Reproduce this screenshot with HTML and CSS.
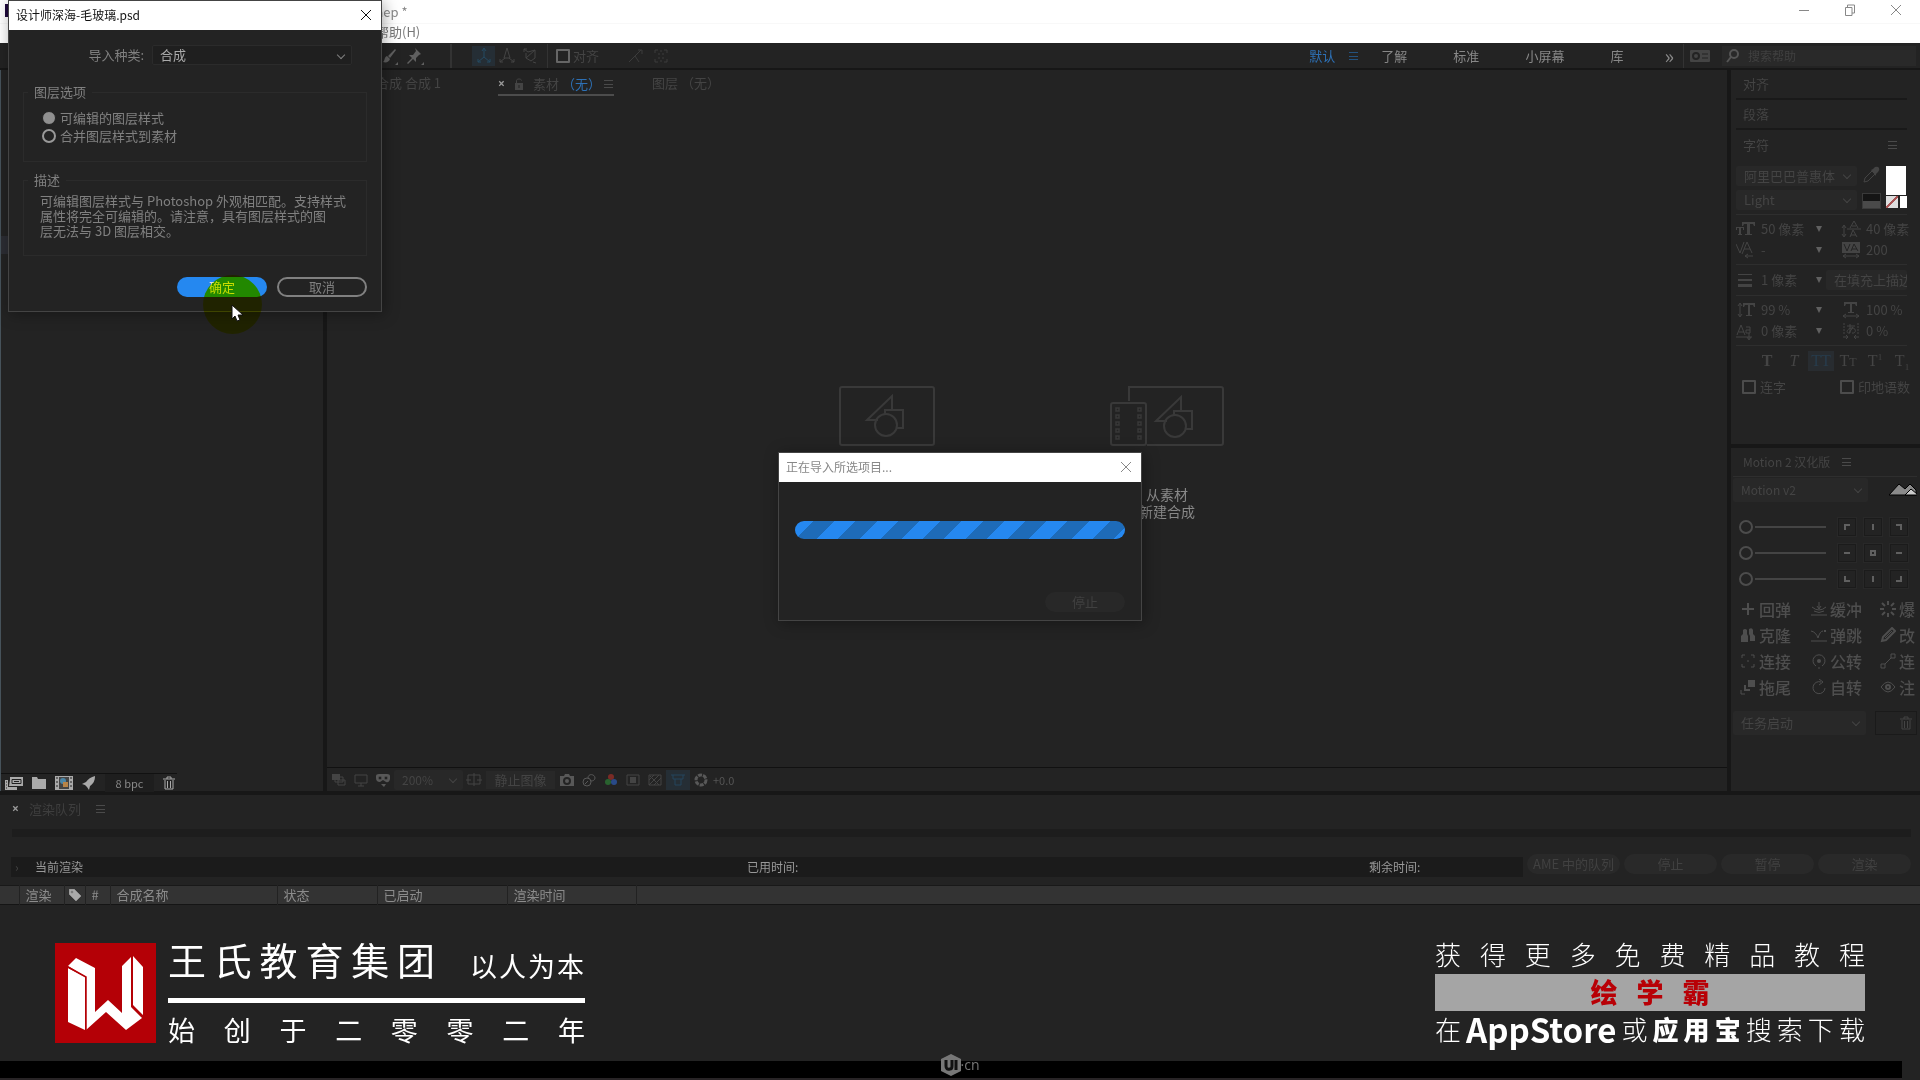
FILE: index.html
```html
<!DOCTYPE html>
<html lang="zh-CN">
<head>
  <meta charset="UTF-8" />
  <meta name="viewport" content="width=device-width, initial-scale=1.0"/>
  <title>After Effects</title>
  <link rel="stylesheet" href="styles.css">
</head>
<body>
  <!-- Title bar and menu -->
  <header class="titlebar">
    <span class="app-icon"></span>
    <span class="file-name">aep *</span>
    <div class="window-buttons">
      <button aria-label="最小化"><svg width="12" height="12" viewBox="0 0 12 12"><path d="M1 6.5h10"/></svg></button>
      <button aria-label="还原"><svg width="12" height="12" viewBox="0 0 12 12"><path d="M1.5 3.500h6.500v8h-6.500zM3.500 3.500v-2.500h7v8h-2.500"/></svg></button>
      <button aria-label="关闭"><svg width="12" height="12" viewBox="0 0 12 12"><path d="M1 1l10 10M11 1L1 11"/></svg></button>
    </div>
  </header>
  <nav class="menubar"><a href="#">帮助(H)</a></nav>

  <!-- Tools -->
  <div class="toolbar">
    <button class="tool bright" aria-label="画笔"><svg width="20" height="20" viewBox="0 0 20 20"><path class="fill" d="M16 3l1 1-6 8-2-2zM8 10l3 3c-1 3-4 4-7 3 2-1 1-5 4-6zM19 16v3h-3z"/></svg></button>
    <button class="tool bright" aria-label="操控点"><svg width="20" height="20" viewBox="0 0 20 20"><path class="fill" d="M10 2l6 6-2 1-3 3v4l-3-3-5 5-1-1 5-5-3-3h4l3-4zM19 16v3h-3z"/></svg></button>
    <i class="bar wide"></i>
    <button class="tool active" aria-label="本地轴"><svg width="20" height="20" viewBox="0 0 20 20"><path d="M10 3v8l-6 5M10 11l6 5M8 5l2-3 2 3M4 13v3h3M16 13v3h-3"/></svg></button>
    <button class="tool" aria-label="世界轴"><svg width="20" height="20" viewBox="0 0 20 20"><path d="M10 2l-3 10h6zM8 12l-5 4M12 12l5 4M3 13v3h3M17 13v3h-3"/></svg></button>
    <button class="tool" aria-label="视图轴"><svg width="20" height="20" viewBox="0 0 20 20"><path d="M4 3l4 3 7-2v8l-4 3-5-3V7M6 12l9-8M4 6V3h3M13 16l3 1"/></svg></button>
    <i class="bar tail"></i>
    <label class="snap"><input type="checkbox"> 对齐</label>
    <button class="tool faint" aria-label="边缘"><svg width="20" height="20" viewBox="0 0 20 20"><path d="M3 16l6-6 4 6M9 10l6-6M12 4h4v4"/></svg></button>
    <button class="tool faint" aria-label="范围"><svg width="20" height="20" viewBox="0 0 20 20"><path d="M4 7V4h3M13 4h3v3M16 13v3h-3M7 16H4v-3M7 8h2M11 8h2M7 12h2M11 12h2M10 4v2M10 14v2"/></svg></button>

    <div class="spaces">
      <a class="on" href="#">默认</a>
      <i class="burger blue"></i>
      <a href="#">了解</a>
      <a href="#">标准</a>
      <a href="#">小屏幕</a>
      <a href="#">库</a>
      <a class="more" href="#">»</a>
    </div>
    <i class="bar"></i>
    <button class="sync" aria-label="同步设置"><svg width="20" height="12" viewBox="0 0 20 12"><rect class="fill" width="20" height="12" rx="1"/><circle cx="6" cy="6" r="3" stroke="#232323" fill="none" stroke-width="2"/><path stroke="#232323" d="M12 4h6M12 8h6"/></svg></button>
    <label class="search">
      <svg width="14" height="14" viewBox="0 0 14 14"><circle cx="8" cy="5" r="4"/><path d="M5 8l-4 5"/></svg>
      <input type="text" placeholder="搜索帮助" aria-label="搜索帮助">
    </label>
  </div>

  <main class="workspace">
    <section class="panel project">
      <div class="project-list"><div class="project-search"></div></div>
      <div class="project-foot">
        <svg width="18" height="14" viewBox="0 0 18 14"><path class="fill" d="M0 4h3v10H0zM3 11h9v3H3zM5 1h13v9H5zM4 4v6h1"/><path stroke="#222" d="M7 3.500h9v4H7zM9 5.500h5M1 6h1M1 9h1M1 12h1"/></svg>
        <svg width="14" height="14" viewBox="0 0 14 14"><path class="fill" d="M0 1h5l1 2h8v10H0z"/></svg>
        <svg width="18" height="14" viewBox="0 0 18 14"><path class="fill" d="M0 0h18v14H0z"/><path fill="#444" stroke="none" d="M4 1h10v12H4z"/><circle cx="8" cy="5" r="3" fill="#4a86a8" stroke="none"/><path fill="#b88448" stroke="none" d="M8 6h5v5H8z"/><path stroke="#222" d="M2 1v12M16 1v12" stroke-dasharray="2 2"/></svg>
        <svg width="14" height="14" viewBox="0 0 14 14"><path class="fill" d="M13 0c0 5-2 8-5 10l-1 4-2-3-2-2-3-1 4-2C6 3 9 1 13 0z"/></svg>
        <button class="bpc">8 bpc</button>
        <svg width="12" height="14" viewBox="0 0 12 14"><path d="M0 3h12M4 3V1h4v2M2 4v9h8V4M4.500 5v7M7.500 5v7"/></svg>
      </div>
    </section>

    <section class="panel viewer">
      <div class="tabs">
        <span class="tab comp-tab">合成 合成 1</span>
        <span class="tab current">
          <b>×</b>
          <svg width="10" height="12" viewBox="0 0 10 12"><path class="fill" d="M1 5h8v7H1z"/><path d="M2.500 5V2.500c0-2 5-2 5 0"/><path stroke="#232323" d="M5 7v3"/></svg>
          <span>素材</span><em>（无）</em>
          <i class="burger"></i>
        </span>
        <span class="tab">图层 （无）</span>
      </div>
      <div class="stage">
        <div class="choice">
          <svg width="96" height="60" viewBox="0 0 96 60"><rect x="1" y="1" width="94" height="58" rx="2"/><path d="M39 34H28l25-24v14M46 28v-4h18v18h-6"/><circle cx="47" cy="39" r="11"/></svg>
        </div>
        <div class="choice">
          <svg width="114" height="60" viewBox="0 0 114 60"><path d="M19 15V1h92q2 0 2 2v54q0 2-2 2H37"/><rect x="1" y="17" width="35" height="42" rx="2"/><path stroke-width="1.500" d="M6 22h3v3H6zM6 29h3v3H6zM6 36h3v3H6zM6 43h3v3H6zM6 50h3v3H6zM28 22h3v3h-3zM28 29h3v3h-3zM28 36h3v3h-3zM28 43h3v3h-3zM28 50h3v3h-3z"/><path d="M57 35H46l25-24v14M64 29v-4h18v18h-6"/><circle cx="65" cy="40" r="11"/></svg>
          <p>从素材<br>新建合成</p>
        </div>
      </div>
      <div class="viewer-foot">
        <svg width="16" height="16" viewBox="0 0 16 16"><path class="fill" d="M1 2h8v6H1z"/><path d="M4 10V5h8v5zM7 13V8h7v5z"/></svg>
        <svg width="16" height="16" viewBox="0 0 16 16"><path d="M2 3h12v8H2zM8 11v3M5 14h6"/></svg>
        <svg class="light" width="16" height="16" viewBox="0 0 16 16"><path class="fill" d="M1 4q0-2 3-2h8q3 0 3 2v3q-1 4-4 3L8 8 5 10Q1 10 1 6zM6 12h5l-2 3z"/><circle cx="5" cy="6" r="2" fill="#232323"/><circle cx="11" cy="6" r="2" fill="#232323"/></svg>
        <span class="pick zoom"><select aria-label="放大率"><option>200%</option></select></span>
        <svg width="16" height="16" viewBox="0 0 16 16"><path d="M2 3h12v9H2zM8 1v13M0 8h5M11 8h5"/></svg>
        <button class="still">静止图像</button>
        <svg class="light" width="16" height="16" viewBox="0 0 16 16"><path class="fill" d="M1 4h4l1-2h4l1 2h4v10H1z"/><circle cx="8" cy="9" r="3" stroke="#232323" stroke-width="2"/></svg>
        <svg class="light" width="16" height="16" viewBox="0 0 16 16"><circle cx="6" cy="10" r="4"/><path d="M7 6c0-5 7-4 7 0 0 2-2 3-4 3M4 12l3-3"/></svg>
        <svg width="16" height="16" viewBox="0 0 16 16"><circle cx="8" cy="5" r="3" fill="#7a2b26" stroke="none"/><circle cx="5" cy="10" r="3" fill="#29622f" stroke="none"/><circle cx="11" cy="10" r="3" fill="#294a88" stroke="none"/></svg>
        <svg width="16" height="16" viewBox="0 0 16 16"><path d="M2 3h12v10H2z"/><path class="fill" d="M5 5h6v6H5z"/></svg>
        <svg width="16" height="16" viewBox="0 0 16 16"><path d="M2 3h12v10H2zM2 8l5-5M2 13L12 3M7 13l7-7M3 4l9 9"/></svg>
        <span class="lit"><svg width="16" height="16" viewBox="0 0 16 16"><path d="M1 3h14M3 3v4h10V3M5 7v6h6V7"/></svg></span>
        <svg class="light" width="16" height="16" viewBox="0 0 16 16"><circle cx="8" cy="8" r="5" stroke-width="3" stroke-dasharray="4 1"/></svg>
        <span class="exposure">+0.0</span>
      </div>
    </section>

    <aside class="side">
      <div class="panel">
        <h3 class="head ruled">对齐</h3>
        <h3 class="head ruled">段落</h3>
        <h3 class="head">字符 <i class="burger"></i></h3>
        <div class="font-row">
          <div class="font-picks">
            <span class="pick"><select aria-label="字体"><option>阿里巴巴普惠体</option></select></span>
            <span class="pick"><select aria-label="字重"><option>Light</option></select></span>
          </div>
          <div class="ink">
            <svg width="18" height="18" viewBox="0 0 18 18"><path d="M2 16l1-4 7-7 3 3-7 7z"/><path class="fill" d="M9 4l2-1 2-2q3-1 4 1t-1 4l-2 2v2z"/></svg>
            <i class="mono"></i>
          </div>
          <div class="fills">
            <i class="white"></i>
            <div><i class="none"></i><i class="white small"></i></div>
          </div>
        </div>
        <div class="metrics">
          <svg width="20" height="18" viewBox="0 0 20 18"><path class="fill" d="M6 2h13v4h-1l-1-2h-3v10h2v1H9v-1h2V4H8L7 6H6zM0 7h8v3H7V8H5v6h1v1H2v-1h1V8H1v2H0z"/></svg><span>50 像素</span><i class="drop"></i>
          <svg width="20" height="18" viewBox="0 0 20 18"><path d="M9 8l4-7 4 7M11 6h4M6 9h14M9 17l3-7 4 7M10 15h5M3 6v10M1 8l2-3 2 3M1 14l2 3 2-3"/></svg><span>40 像素</span>
          <svg width="20" height="18" viewBox="0 0 20 18"><path d="M0 3l4 9 4-11M6 13L11 1l5 11M8 8h6M9 15h8M12 13l-3 2 3 2"/></svg><span>-</span><i class="drop"></i>
          <svg width="20" height="18" viewBox="0 0 20 18"><path class="fill" d="M1 1h18v11H1z"/><path stroke="#232323" d="M3 3l3 7 3-7M10 10l3-7 4 7M11 8h5"/><path d="M2 15h16M5 13l-3 2 3 2M15 13l3 2-3 2"/></svg><span>200</span>
        </div>
        <div class="metrics">
          <svg width="20" height="18" viewBox="0 0 20 18"><path class="fill" d="M2 3h14v1H2zM2 8h14v2H2zM2 13h14v3H2z"/></svg><span>1 像素</span><i class="drop"></i>
          <span class="pick stroke-pick"><select aria-label="描边方式"><option>在填充上描边</option></select></span>
        </div>
        <div class="metrics">
          <svg width="20" height="18" viewBox="0 0 20 18"><path d="M4 3v12M2 5l2-3 2 3M2 13l2 3 2-3"/><path class="fill" d="M7 2h12v4h-1l-1-2h-3v10h2v1h-6v-1h2V4H9L8 6H7z"/></svg><span>99 %</span><i class="drop"></i>
          <svg width="20" height="18" viewBox="0 0 20 18"><path class="fill" d="M3 1h13v4h-1l-1-2h-3v8h2v1H7v-1h2V3H5L4 5H3z"/><path d="M2 15h16M5 13l-3 2 3 2M15 13l3 2-3 2"/></svg><span>100 %</span>
          <svg width="20" height="18" viewBox="0 0 20 18"><path d="M1 13L5 3l4 10M3 10h5M0 15h16M10 5h4v6h-4V8h4M13 11v6M11 15l2 3 2-3"/></svg><span>0 像素</span><i class="drop"></i>
          <svg width="20" height="18" viewBox="0 0 20 18"><path stroke-dasharray="2 1" d="M3 1v12M17 1v12"/><path d="M6 4h8M9 2v9c-5 1-3-5 2-5s4 6 0 5M12 5l-4 6M2 15h5M5 13l2 2-2 2M18 15h-5M15 13l-2 2 2 2"/></svg><span>0 %</span>
        </div>
        <div class="faces">
          <button><b>T</b></button><button><em>T</em></button><button class="on">TT</button><button>T<small>T</small></button><button>T<sup>1</sup></button><button>T<sub>1</sub></button>
        </div>
        <div class="checks">
          <label><input type="checkbox">连字</label>
          <label><input type="checkbox">印地语数</label>
        </div>
      </div>

      <div class="panel motion">
        <h3 class="head">Motion 2 汉化版 <i class="burger"></i></h3>
        <div class="motion-top">
          <span class="pick"><select aria-label="Motion"><option>Motion v2</option></select></span>
          <svg width="28" height="14" viewBox="0 0 28 14"><path fill="#8a8a8a" stroke="#000" d="M0 12L10 1l6 5 5-5 6 6v5z"/><path fill="#ccc" stroke="#000" d="M16 12l6-6 6 5v1z"/></svg>
        </div>
        <div class="easing">
          <div class="sliders">
            <input type="range" value="0" aria-label="缓入">
            <input type="range" value="0" aria-label="缓动">
            <input type="range" value="0" aria-label="缓出">
          </div>
          <div class="anchors">
            <button aria-label="左上"><svg width="16" height="16" viewBox="0 0 16 16"><path d="M6 11V6h5"/></svg></button>
            <button aria-label="上"><svg width="16" height="16" viewBox="0 0 16 16"><path d="M8 5v6"/></svg></button>
            <button aria-label="右上"><svg width="16" height="16" viewBox="0 0 16 16"><path d="M5 6h5v5"/></svg></button>
            <button aria-label="左"><svg width="16" height="16" viewBox="0 0 16 16"><path d="M5 8h6"/></svg></button>
            <button aria-label="中"><svg width="16" height="16" viewBox="0 0 16 16"><path d="M6 6h4v4H6z"/></svg></button>
            <button aria-label="右"><svg width="16" height="16" viewBox="0 0 16 16"><path d="M5 8h6"/></svg></button>
            <button aria-label="左下"><svg width="16" height="16" viewBox="0 0 16 16"><path d="M6 5v5h5"/></svg></button>
            <button aria-label="下"><svg width="16" height="16" viewBox="0 0 16 16"><path d="M8 5v6"/></svg></button>
            <button aria-label="右下"><svg width="16" height="16" viewBox="0 0 16 16"><path d="M5 10h5V5"/></svg></button>
          </div>
        </div>
        <div class="actions">
          <button><svg width="16" height="16" viewBox="0 0 16 16"><path stroke-width="2" d="M8 2v12M2 8h12"/></svg>回弹</button>
          <button><svg width="16" height="16" viewBox="0 0 16 16"><path d="M8 1v6M6 5l2 3 2-3M1 6q7 6 14 0M3 10q5 3 10 0M0 14h16"/></svg>缓冲</button>
          <button><svg width="16" height="16" viewBox="0 0 16 16"><path stroke-width="2" d="M8 0v4M8 12v4M0 8h4M12 8h4M2 2l3 3M11 11l3 3M14 2l-3 3M5 11l-3 3"/></svg>爆</button>
          <button><svg width="16" height="16" viewBox="0 0 16 16"><path class="fill" d="M1 15V9l2-2V3q2-2 4 0v4l1 2v6zM9 2q3-2 4 1v4l2 2v5h-5V9L9 7z"/></svg>克隆</button>
          <button><svg width="16" height="16" viewBox="0 0 16 16"><path d="M0 4q5 1 7 7 2-7 5-7M0 14h16"/><path class="fill" d="M13 3h2v2h-2z"/></svg>弹跳</button>
          <button><svg width="16" height="16" viewBox="0 0 16 16"><path stroke-width="2" d="M2 14l1-4 9-9 3 3-9 9z"/><path d="M5 11l7-7"/></svg>改</button>
          <button><svg width="16" height="16" viewBox="0 0 16 16"><path d="M2 5V2h3M11 2h3v3M14 11v3h-3M5 14H2v-3M7 8h2"/></svg>连接</button>
          <button><svg width="16" height="16" viewBox="0 0 16 16"><path d="M5 13a6 6 0 1 1 6 0"/><circle class="fill" cx="8" cy="8" r="2"/><path d="M8 14v2"/></svg>公转</button>
          <button><svg width="16" height="16" viewBox="0 0 16 16"><path d="M1 11h4v4H1zM11 1h4v4h-4zM5 11l6-6"/></svg>连</button>
          <button><svg width="16" height="16" viewBox="0 0 16 16"><path class="fill" d="M8 1h7v7H8z"/><path stroke-width="2" d="M5 6v5h5"/><path d="M1 11v4h4"/></svg>拖尾</button>
          <button><svg width="16" height="16" viewBox="0 0 16 16"><path d="M10 3a6 6 0 1 0 4 6M8 0l4 3-4 3"/></svg>自转</button>
          <button><svg width="16" height="16" viewBox="0 0 16 16"><path d="M1 8q7-10 14 0-7 10-14 0z"/><circle cx="8" cy="8" r="2" stroke-width="2"/></svg>注</button>
        </div>
        <div class="motion-end">
          <span class="pick"><select aria-label="任务"><option>任务启动</option></select></span>
          <button class="bin" aria-label="删除"><svg width="12" height="14" viewBox="0 0 12 14"><path d="M0 3h12M4 3V1h4v2M2 4v9h8V4M4.500 5v7M7.500 5v7"/></svg></button>
        </div>
      </div>
    </aside>
  </main>

  <!-- Render queue -->
  <section class="queue">
    <div class="queue-tab"><b>×</b><span>渲染队列</span><i class="burger"></i></div>
    <div class="queue-track"></div>
    <div class="queue-row">
      <div class="queue-info">
        <span class="current-render">当前渲染</span>
        <span class="elapsed">已用时间:</span>
        <span class="remain">剩余时间:</span>
      </div>
      <button>AME 中的队列</button>
      <button>停止</button>
      <button>暂停</button>
      <button>渲染</button>
    </div>
    <table class="queue-table">
      <colgroup><col class="c1"><col class="c2"><col class="c3"><col class="c4"><col class="c5"><col class="c6"><col class="c7"><col class="c8"><col></colgroup>
      <tr>
        <th></th>
        <th>渲染</th>
        <th class="tag"><svg width="12" height="12" viewBox="0 0 12 12"><path fill="#aaa" d="M0 0h5l7 7-5 5-7-7z"/><circle cx="3" cy="3" r="1" fill="#333"/></svg></th>
        <th>#</th>
        <th>合成名称</th>
        <th>状态</th>
        <th>已启动</th>
        <th>渲染时间</th>
        <th></th>
      </tr>
    </table>
  </section>

  <footer class="banner">
    <svg class="brand-logo" width="101" height="100" viewBox="0 0 101 100">
      <path fill="#b40006" d="M0 0h101v100H0z"/>
      <path fill="#fff" d="M13 23l8-8 19 10v44l13-12 14 13V23l9-9v50l11 11-16 12-20-18-20 18V34z"/>
      <path fill="#fff" d="M13 25l17 9v53l-17-8zM78 13l10 11v48L78 62z"/>
      <path fill="none" stroke="#b40006" stroke-width="1.500" d="M13 24l18 10v53M77 12v51l11 11"/>
    </svg>
    <div class="brand">
      <div class="brand-top"><h1>王氏教育集团</h1><p>以人为本</p></div>
      <p class="brand-since">始创于二零零二年</p>
    </div>
    <div class="promo">
      <p class="spread">获得更多免费精品教程</p>
      <p class="promo-name"><span>绘学霸</span></p>
      <p class="promo-store"><span>在</span><b class="store">AppStore</b><span>或</span><b>应</b><b>用</b><b>宝</b><span>搜</span><span>索</span><span>下</span><span>载</span></p>
    </div>
  </footer>
  <div class="bottom-bar">
    <div class="watermark">
      <svg width="20" height="22" viewBox="0 0 20 22"><path fill="#777" d="M10 0l10 5v12l-10 5-10-5V5z"/><path fill="none" stroke="#111" stroke-width="3" d="M5 6v6q0 4 4 3 2 0 2-3V6M15 6v10"/></svg>
      <span>·cn</span>
    </div>
  </div>

  <!-- Import progress -->
  <div class="dialog progress-dialog">
    <div class="dialog-title">正在导入所选项目... <button aria-label="关闭"><svg width="12" height="12" viewBox="0 0 12 12"><path d="M1 1l10 10M11 1L1 11"/></svg></button></div>
    <div class="dialog-body">
      <div class="progress" role="progressbar"></div>
      <button class="stop">停止</button>
    </div>
  </div>

  <!-- PSD import options -->
  <form class="dialog import-dialog">
    <div class="dialog-title">设计师深海-毛玻璃.psd <button type="button" aria-label="关闭"><svg width="12" height="12" viewBox="0 0 12 12"><path d="M1 1l10 10M11 1L1 11"/></svg></button></div>
    <div class="dialog-body">
      <div class="kind">
        <label for="kind">导入种类:</label>
        <span class="pick"><select id="kind"><option>合成</option></select></span>
      </div>
      <fieldset class="options">
        <legend>图层选项</legend>
        <label><input type="radio" name="layer" checked>可编辑的图层样式</label>
        <label><input type="radio" name="layer">合并图层样式到素材</label>
      </fieldset>
      <fieldset class="about">
        <legend>描述</legend>
        <p>可编辑图层样式与 Photoshop 外观相匹配。支持样式<br>属性将完全可编辑的。请注意，具有图层样式的图<br>层无法与 3D 图层相交。</p>
      </fieldset>
      <div class="dialog-buttons">
        <button type="button" class="ok">确定</button>
        <button type="button" class="cancel">取消</button>
      </div>
    </div>
  </form>

  <div class="click-spot"></div>
  <svg class="cursor" width="13" height="19" viewBox="0 0 13 19"><path fill="#fff" stroke="#111" d="M1 1v14l3-3 2 5 3-1-2-5h5z"/></svg>
</body>
</html>
```

FILE: styles.css
```css
* {
  margin: 0;
  padding: 0;
  box-sizing: border-box;
}

body {
  display: flex;
  flex-direction: column;
  min-height: 100vh;
  overflow: hidden;
  background: #232323;
  color: #444;
  font-family: "Noto Sans CJK SC", "Noto Sans", sans-serif;
  font-size: 13px;
  line-height: 18px;
}

button, input, select {
  font: inherit;
  color: inherit;
  background: none;
  border: none;
}

a {
  color: inherit;
  text-decoration: none;
}

i, em {
  font-style: normal;
}

h3 {
  font-size: 13px;
  font-weight: normal;
}

svg {
  display: block;
  flex: none;
  fill: none;
  stroke: currentColor;
}

svg .fill {
  fill: currentColor;
  stroke: none;
}

/* title bar */
.titlebar {
  display: flex;
  height: 24px;
  background: #fff;
  color: #888;
  border-bottom: 1px solid #f8f8f8;
}

.app-icon {
  width: 16px;
  height: 13px;
  margin: 4px 0 0 5px;
  background: #1f0a3c;
}

.file-name {
  margin: 3px 0 0 355px;
}

.window-buttons {
  display: flex;
  gap: 34px;
  margin: 4px 18px 0 auto;
  align-items: flex-start;
}

.menubar {
  height: 19px;
  padding-left: 376px;
  background: #fff;
  color: #777;
  line-height: 16px;
}

/* toolbar */
.toolbar {
  display: flex;
  align-items: center;
  height: 27px;
  padding: 1px 4px 0 376px;
  border-bottom: 2px solid #171717;
}

.tool {
  display: flex;
  justify-content: center;
  width: 23px;
}

.tool.bright {
  width: 26px;
  color: #606060;
}

.tool.faint {
  width: 25px;
  color: #3c3c3c;
}

.tool.active {
  background: #252e35;
  color: #244a62;
}

.bar {
  width: 1px;
  height: 24px;
  background: #333;
}

.bar.wide {
  width: 2px;
  margin: 0 20px 0 22px;
}

.bar.tail {
  margin-left: 6px;
}

.snap {
  display: flex;
  align-items: center;
  gap: 3px;
  margin: 0 24px 0 8px;
}

input[type="checkbox"] {
  appearance: none;
  flex: none;
  width: 14px;
  height: 14px;
  border: 2px solid #4c4c4c;
  border-radius: 1px;
}

.snap input[type="checkbox"] {
  border-color: #666;
}

.spaces {
  display: flex;
  align-items: center;
  gap: 46px;
  margin-left: auto;
  margin-right: 9px;
  color: #888;
}

.spaces .on {
  margin-right: -32px;
  color: #2d70b5;
}

.spaces .burger {
  margin-right: -23px;
}

.spaces .more {
  margin-left: -5px;
  font-size: 20px;
}

.burger {
  display: inline-block;
  width: 9px;
  height: 8px;
  border: solid #4a4a4a;
  border-width: 1px 0;
  background: linear-gradient(#4a4a4a, #4a4a4a) center / 9px 1px no-repeat;
}

.burger.blue {
  border-color: #24527e;
  background: linear-gradient(#24527e, #24527e) center / 9px 1px no-repeat;
}

.sync {
  margin: 0 12px 0 6px;
  color: #444;
}

.search {
  display: flex;
  align-items: center;
  gap: 8px;
  width: 194px;
  height: 20px;
  padding-left: 4px;
  background: #292929;
  color: #555;
  font-size: 12px;
}

.search svg {
  stroke-width: 2;
}

.search input {
  width: 150px;
}

.search input::placeholder {
  color: #404040;
}

/* panels */
.workspace {
  display: flex;
  flex: 1;
  gap: 4px;
  background: #171717;
  border-bottom: 4px solid #171717;
}

.panel {
  background: #232323;
}

.project {
  display: flex;
  flex-direction: column;
  width: 323px;
  border-left: 1px solid #46525a;
}

.project-list {
  flex: 1;
  padding-top: 166px;
}

.project-search {
  height: 18px;
  background: #2c2d33;
}

.project-foot {
  display: flex;
  align-items: center;
  height: 18px;
  width: 176px;
  gap: 9px;
  padding-left: 4px;
  border-top: 1px solid #111;
  color: #aaa;
}

.bpc {
  width: 49px;
  background: #1e1e1e;
  color: #888;
  font-size: 11px;
}

.viewer {
  display: flex;
  flex-direction: column;
  flex: 1;
}

.tabs {
  display: flex;
  height: 40px;
  padding: 1px 0 0 49px;
}

.tab {
  height: 25px;
  padding-top: 3px;
}

.comp-tab {
  margin-right: 57px;
}

.current {
  display: flex;
  align-items: center;
  gap: 9px;
  width: 116px;
  margin-right: 38px;
  border-bottom: 2px solid #4c4c4c;
  white-space: nowrap;
}

.current em {
  margin: 0 -6px 0 -6px;
  color: #2d70b5;
}

.current b, .queue-tab b {
  width: 7px;
  color: #999;
  font-family: "Open Sans", sans-serif;
  font-size: 12px;
}

.stage {
  display: flex;
  justify-content: center;
  flex: 1;
  padding-top: 276px;
}

.choice {
  display: flex;
  flex-direction: column;
  align-items: center;
  gap: 40px;
  width: 280px;
  color: #393939;
}

.choice svg {
  stroke-width: 2;
}

.choice p {
  color: #888;
  font-size: 14px;
  line-height: 17px;
  text-align: center;
}

.viewer-foot {
  display: flex;
  align-items: center;
  gap: 6px;
  height: 24px;
  padding-left: 4px;
  border-top: 1px solid #111;
}

.viewer-foot .light {
  color: #585858;
}

.pick {
  display: flex;
  position: relative;
  height: 20px;
  background: #282828;
  border-radius: 2px;
}

.pick select {
  appearance: none;
  width: 100%;
  padding: 0 20px 0 8px;
}

.pick::after {
  content: "";
  position: absolute;
  top: 6px;
  right: 7px;
  width: 5px;
  height: 5px;
  border: solid currentColor;
  border-width: 0 1px 1px 0;
  transform: rotate(45deg);
}

.zoom {
  width: 69px;
  margin: 0 -3px;
  font-size: 12px;
}

.still {
  width: 69px;
  margin: 0 -2px;
  background: #282828;
}

.lit {
  margin: 0 -3px;
  padding: 2px 4px;
  background: #252e35;
  color: #24455c;
}

.exposure {
  margin-left: -2px;
  color: #555;
  font-size: 11px;
}

/* right column */
.side {
  display: flex;
  flex-direction: column;
  gap: 4px;
  width: 189px;
  overflow: hidden;
  white-space: nowrap;
}

.side .panel {
  height: 374px;
  padding: 0 13px 0 5px;
  overflow: hidden;
}

.head {
  display: flex;
  justify-content: space-between;
  align-items: center;
  height: 30px;
  padding: 0 10px 0 7px;
}

.ruled {
  border-bottom: 2px solid #191919;
}

.font-row {
  display: flex;
  gap: 5px;
  margin-top: 6px;
  padding-bottom: 4px;
}

.font-picks {
  display: grid;
  gap: 4px;
  width: 123px;
}

.ink {
  display: grid;
  gap: 8px;
}

.mono {
  width: 19px;
  height: 16px;
  border: 1px solid #3a3a3a;
  background: linear-gradient(#151515 50%, #4a4a4a 50%);
}

.fills i {
  display: block;
}

.fills .white {
  width: 20px;
  height: 29px;
  background: #fff;
}

.fills div {
  display: flex;
  gap: 2px;
  margin-top: 1px;
}

.fills .white.small {
  width: 7px;
  height: 12px;
}

.fills .none {
  width: 12px;
  height: 12px;
  background: linear-gradient(135deg, #ddd 45%, #a55 45% 55%, #ddd 55%);
}

.metrics {
  display: grid;
  grid-template-columns: 20px 50px 20px 20px 1fr;
  gap: 3px 5px;
  align-items: center;
  padding: 5px 0;
  border-top: 1px solid #2e2e2e;
}

.drop {
  width: 0;
  border: 3px solid transparent;
  border-top: 6px solid #606060;
  border-bottom: none;
}

.metrics .stroke-pick {
  grid-column: 4 / 6;
  margin-left: -15px;
  overflow: hidden;
}

.metrics .stroke-pick select {
  padding-right: 0;
}

.stroke-pick::after {
  display: none;
}

.faces {
  display: flex;
  gap: 1px;
  padding: 5px 0 5px 18px;
  border-top: 1px solid #2e2e2e;
  font-family: "Liberation Serif", serif;
  font-size: 16px;
}

.faces button {
  flex: none;
  width: 26px;
  height: 20px;
}

.faces em {
  font-style: italic;
}

.faces sup, .faces sub {
  font-size: 9px;
  line-height: 0;
}

.faces small {
  font-size: 12px;
}

.faces .on {
  background: #282c30;
  color: #273c4c;
}

.checks {
  display: flex;
  gap: 54px;
  padding: 2px 0 0 6px;
}

.checks label {
  display: flex;
  align-items: center;
  gap: 4px;
}

/* motion */
.side .motion {
  flex: 1;
  padding: 0 3px 0 2px;
}

.motion .head {
  justify-content: flex-start;
  gap: 12px;
  height: 29px;
  padding: 0 10px;
  border-bottom: 1px solid #2e2e2e;
  font-size: 12px;
}

.motion .pick {
  width: 135px;
  height: 24px;
}

.motion .pick::after {
  top: 8px;
}

.motion-top {
  display: flex;
  justify-content: space-between;
  align-items: center;
  padding-top: 1px;
  font-size: 12px;
}

.easing {
  display: flex;
  gap: 12px;
  padding: 12px 0 6px 6px;
}

.sliders {
  display: grid;
  width: 87px;
}

.sliders input {
  appearance: none;
  width: 87px;
  height: 18px;
  margin: 4px 0;
  background: linear-gradient(#444, #444) 16px center / 71px 2px no-repeat;
}

.sliders input::-webkit-slider-thumb {
  appearance: none;
  width: 14px;
  height: 14px;
  border: 2px solid #4c4c4c;
  border-radius: 50%;
}

.anchors {
  display: grid;
  grid-template-columns: repeat(3, 18px);
  gap: 8px;
  align-content: center;
}

.anchors button {
  height: 18px;
  border: 1px solid #1b1b1b;
  outline: 1px solid #282828;
  color: #606060;
}

.anchors svg {
  stroke-width: 2;
}

.actions {
  display: grid;
  grid-template-columns: 62px 60px 60px;
  gap: 4px 9px;
  padding-left: 7px;
  font-size: 16px;
  line-height: 22px;
  font-weight: 500;
  color: #4e4e4e;
}

.actions button {
  display: flex;
  align-items: center;
  gap: 3px;
}

.motion-end {
  display: flex;
  gap: 9px;
  margin-top: 13px;
}

.bin {
  display: flex;
  justify-content: flex-end;
  align-items: center;
  width: 42px;
  padding-right: 4px;
  border: 1px solid #1a1a1a;
}

/* render queue */
.queue-tab {
  display: flex;
  align-items: center;
  gap: 10px;
  height: 34px;
  padding: 0 0 6px 12px;
  color: #3e3e3e;
}

.queue-tab span {
  margin-right: 5px;
}

.queue-track {
  height: 8px;
  margin: 0 9px 17px 12px;
  background: #1d1d1d;
}

.queue-row {
  display: flex;
  gap: 4px;
  margin: 0 9px 8px 11px;
}

.queue-row button {
  width: 93px;
  height: 20px;
  border-radius: 10px;
  background: #292929;
  color: #414141;
}

.queue-info {
  display: grid;
  grid-template-columns: 736px 1fr 154px;
  flex: 1;
  height: 20px;
  margin-top: 3px;
  background: #1b1b1b;
  color: #999;
  font-size: 12px;
  line-height: 20px;
}

.current-render::before {
  content: "›";
  display: inline-block;
  width: 20px;
  padding-left: 4px;
  color: #444;
}

.queue-table {
  width: 100%;
  table-layout: fixed;
  border-collapse: collapse;
  background: #333;
  color: #8c8c8c;
  border-top: 1px solid #191919;
  border-bottom: 1px solid #151515;
}

.queue-table th {
  height: 19px;
  padding-left: 6px;
  border-right: 1px solid #222;
  font-weight: normal;
  text-align: left;
}

.queue-table .tag {
  padding-left: 4px;
}

.queue-table th:last-child {
  border-right: none;
}

.c1 { width: 19px; }
.c2 { width: 45px; }
.c3 { width: 21px; }
.c4 { width: 25px; }
.c5 { width: 167px; }
.c6 { width: 100px; }
.c7 { width: 130px; }
.c8 { width: 129px; }

/* banner */
.banner {
  display: flex;
  padding: 38px 55px 13px;
  color: #fff;
}

.brand-logo {
  stroke: none;
}

.brand {
  width: 417px;
  margin-left: 12px;
}

.brand-top {
  display: flex;
  justify-content: space-between;
  height: 60px;
  padding-right: 1px;
  border-bottom: 5px solid #fff;
}

.brand h1 {
  width: 267px;
  font-size: 38px;
  line-height: 32px;
  font-weight: 400;
  text-align-last: justify;
}

.brand-top p {
  width: 114px;
  font-size: 27px;
  line-height: 46px;
  text-align-last: justify;
}

.brand-since {
  padding-top: 9px;
  font-size: 27px;
  line-height: 36px;
  text-align-last: justify;
}

.promo {
  width: 430px;
  margin-left: auto;
  font-size: 26px;
  line-height: 30px;
  font-weight: 300;
}

.spread {
  height: 31px;
  line-height: 22px;
  text-align-last: justify;
}

.promo-name {
  height: 37px;
  background: #a5a5a5;
  color: #b80006;
  font-weight: 900;
  font-size: 27px;
  line-height: 36px;
}

.promo-name span {
  display: block;
  width: 119px;
  margin: 0 auto;
  text-align-last: justify;
}

.promo-store {
  display: flex;
  justify-content: space-between;
  align-items: center;
  height: 36px;
}

.promo-store b {
  font-weight: 900;
}

.promo-store .store {
  font-size: 33px;
  font-weight: 700;
}

.bottom-bar {
  display: flex;
  justify-content: center;
  height: 19px;
  margin-right: 18px;
  background: #000;
  border-bottom: 2px solid #282426;
}

.watermark {
  display: flex;
  align-items: center;
  height: 22px;
  margin-top: -7px;
  padding-left: 18px;
  color: #777;
  font-family: "Open Sans", sans-serif;
  font-size: 14px;
}

.watermark svg {
  stroke: none;
}

/* dialogs */
.dialog {
  position: absolute;
  border: 1px solid #444;
  background: #232323;
  color: #808080;
  box-shadow: 2px 2px 14px rgba(0, 0, 0, .35);
}

.dialog-title {
  display: flex;
  justify-content: space-between;
  align-items: center;
  height: 29px;
  padding: 0 9px 2px 7px;
  background: #fff;
  color: #111;
  font-size: 12px;
}

.progress-dialog {
  top: 452px;
  left: 778px;
  width: 364px;
  height: 169px;
}

.progress-dialog .dialog-title {
  color: #888;
}

.progress-dialog .dialog-body {
  padding: 39px 16px 0 16px;
}

.progress {
  height: 18px;
  border-radius: 9px;
  background: repeating-linear-gradient(135deg, #2588f0 0 13px, #1e6bb8 13px 28px, #2588f0 28px 30px);
}

.stop {
  display: block;
  width: 80px;
  height: 20px;
  margin: 53px 0 0 auto;
  border-radius: 10px;
  background: #282828;
  color: #404040;
}

.import-dialog {
  top: 0;
  left: 8px;
  width: 374px;
  height: 312px;
}

.import-dialog .dialog-body {
  padding: 15px 14px 0 14px;
}

.kind {
  display: flex;
  align-items: center;
  justify-content: flex-end;
  gap: 8px;
  padding-right: 15px;
}

.kind .pick {
  width: 200px;
  border: 1px solid #2b2b2b;
  background: #1f1f1f;
  color: #aaa;
}

.kind .pick::after {
  color: #808080;
}

.kind .pick select {
  padding-left: 7px;
}

fieldset {
  border: 1px solid #2b2b2b;
}

legend {
  margin-left: 4px;
  padding: 0 6px;
}

.options {
  height: 79px;
  margin-top: 18px;
}

.options label {
  display: flex;
  align-items: center;
  gap: 4px;
  padding-left: 18px;
}

.options legend + label {
  margin-top: 8px;
}

input[type="radio"] {
  appearance: none;
  width: 14px;
  height: 14px;
  border: 2px solid #999;
  border-radius: 50%;
}

input[type="radio"]:checked {
  border: 1px solid #232323;
  background: #909090;
}

.about {
  height: 85px;
  margin-top: 9px;
}

.about p {
  padding: 4px 0 0 16px;
  line-height: 15px;
  white-space: nowrap;
}

.dialog-buttons {
  display: flex;
  justify-content: flex-end;
  gap: 10px;
  margin-top: 21px;
}

.dialog-buttons button {
  width: 90px;
  height: 20px;
  border-radius: 10px;
}

.ok {
  background: #2588f0;
  color: #ddd;
}

.dialog-buttons .cancel {
  border: 2px solid #808080;
  line-height: 16px;
}

/* click highlight and pointer */
.click-spot {
  position: absolute;
  top: 275px;
  left: 203px;
  width: 59px;
  height: 59px;
  border-radius: 50%;
  background: #e8ff00;
  mix-blend-mode: multiply;
}

.cursor {
  position: absolute;
  top: 304px;
  left: 231px;
}
```
